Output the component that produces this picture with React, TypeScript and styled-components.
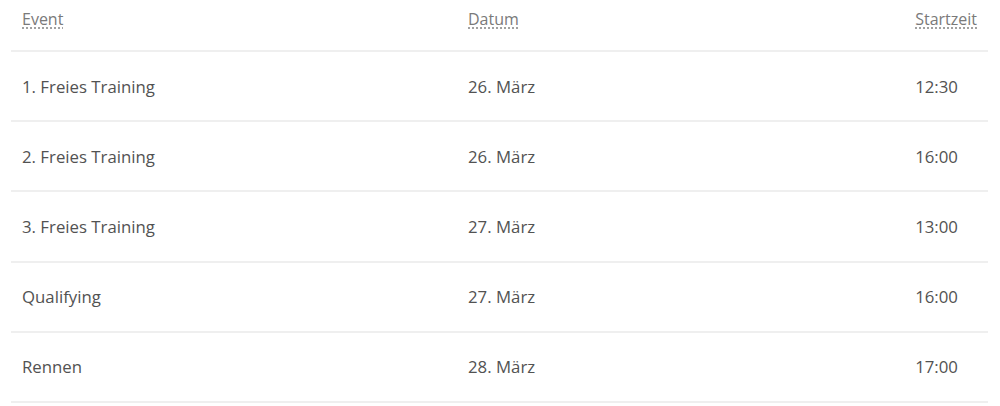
import styled, { createGlobalStyle } from 'styled-components'

const GlobalStyle = createGlobalStyle`
  body {
    margin: 0;
    background: #fff;
    font-family: "Open Sans", Lato, sans-serif;
  }
`

const Wrapper = styled.div`
  padding: 0 12px 0 11px;
`

const Table = styled.table`
  width: 100%;
  border-collapse: collapse;
  color: #525252;
`

const HeadCell = styled.th<{ $width?: string }>`
  height: 42px;
  padding: 8px 11px 0;
  vertical-align: top;
  text-align: left;
  font-weight: 400;
  font-size: 16px;
  color: #7a7a7a;
  border-bottom: 2px solid #efefef;
  width: ${p => p.$width || 'auto'};
  white-space: nowrap;
`

const Abbr = styled.abbr`
  text-decoration: underline dotted #8a8a8a;
  text-underline-offset: 3px;
  cursor: help;
`

const Row = styled.tr`
  border-bottom: 2px solid #efefef;
`

const Cell = styled.td`
  height: 68.2px;
  padding: 0 11px;
  font-size: 16.8px;
  text-align: left;
  white-space: nowrap;
`

const sessions = [
  { event: '1. Freies Training', date: '26. März', time: '12:30' },
  { event: '2. Freies Training', date: '26. März', time: '16:00' },
  { event: '3. Freies Training', date: '27. März', time: '13:00' },
  { event: 'Qualifying', date: '27. März', time: '16:00' },
  { event: 'Rennen', date: '28. März', time: '17:00' },
]

export default function App() {
  return (
    <Wrapper>
      <GlobalStyle />
      <Table>
        <thead>
          <tr>
            <HeadCell $width="424px">
              <Abbr title="Event">Event</Abbr>
            </HeadCell>
            <HeadCell>
              <Abbr title="Datum">Datum</Abbr>
            </HeadCell>
            <HeadCell $width="1%">
              <Abbr title="Startzeit">Startzeit</Abbr>
            </HeadCell>
          </tr>
        </thead>
        <tbody>
          {sessions.map(s => (
            <Row key={s.event}>
              <Cell>{s.event}</Cell>
              <Cell>{s.date}</Cell>
              <Cell>{s.time}</Cell>
            </Row>
          ))}
        </tbody>
      </Table>
    </Wrapper>
  )
}
